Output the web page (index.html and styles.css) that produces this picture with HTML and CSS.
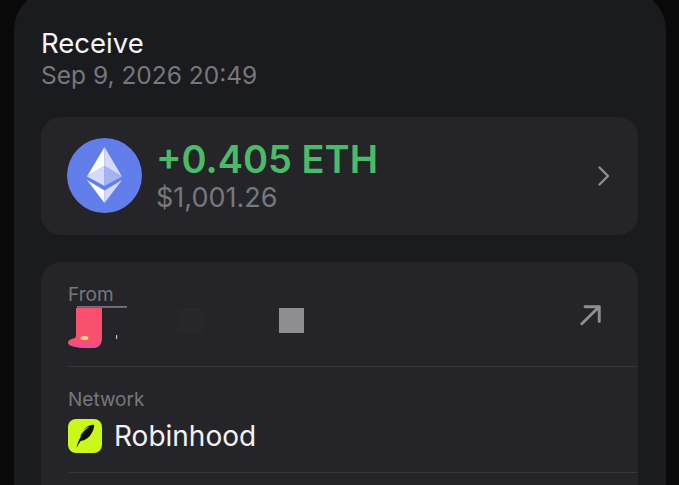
FILE: index.html
```
<!DOCTYPE html>
<html lang="en">
<head>
<meta charset="utf-8">
<title>Receive</title>
<link rel="stylesheet" href="styles.css">
</head>
<body>
<main class="sheet">
  <header class="head">
    <h1 class="title">Receive</h1>
    <p class="date">Sep 9, 2026 20:49</p>
  </header>
  <section class="card amount">
    <svg class="eth" viewBox="0 0 75 75" aria-hidden="true">
      <circle cx="37.5" cy="37.5" r="37.5" fill="#627eea"/>
      <path d="M37.500 9 20 38.500 37.500 28z" fill="#fdfdff"/>
      <path d="M37.500 9 55 38.500 37.500 28z" fill="#d3dafa"/>
      <path d="M20 38.500 37.500 28v20z" fill="#d5dbfa"/>
      <path d="M55 38.500 37.500 28v20z" fill="#a5b3f3"/>
      <path d="M20 42 37.500 52.500V65z" fill="#fdfdff"/>
      <path d="M55 42 37.500 52.500V65z" fill="#d3dafa"/>
    </svg>
    <div class="values">
      <div class="crypto">+0.405 ETH</div>
      <div class="fiat">$1,001.26</div>
    </div>
    <svg class="chevron" viewBox="0 0 14 22" aria-hidden="true">
      <path d="M2.500 2.500 11 11l-8.500 8.500" fill="none" stroke="#8e8e93" stroke-width="2.400" stroke-linecap="round" stroke-linejoin="round"/>
    </svg>
  </section>
  <section class="card details">
    <div class="row row-from">
      <div class="label">From</div>
      <div class="value-line">
        <svg class="redacted" viewBox="0 0 240 50" aria-hidden="true">
          <rect x="9" y="0" width="50" height="1.800" fill="#77777b"/>
          <path d="M8 2h26v29c0 8-3 11-10 11C12 42 1 41 0 37c0-3 3-4 7-5 1-1 1-3 1-5z" fill="#f8506f"/>
          <path d="M0 37c5 1 14 1 20 1 8 0 13-1 14-5-1 6-4 9-10 9C12 42 1 41 0 37z" fill="#ed4b93"/>
          <ellipse cx="16.500" cy="32" rx="4" ry="2" fill="#f7cf7e"/>
          <rect x="48" y="29" width="1.200" height="4" fill="#c8c8cc"/>
          <rect x="110" y="2" width="26" height="25" fill="#27272b"/>
          <rect x="211" y="2" width="25" height="25" fill="#8e8d92"/>
        </svg>
        <svg class="arrow" viewBox="0 0 24 24" aria-hidden="true">
          <path d="M2 21.500 21 3M5.500 3H21v16" fill="none" stroke="#8e8e93" stroke-width="3.200" stroke-linecap="round" stroke-linejoin="round"/>
        </svg>
      </div>
    </div>
    <div class="row row-network">
      <div class="label">Network</div>
      <div class="network">
        <svg class="rh" viewBox="0 0 34 34" aria-hidden="true">
          <rect width="34" height="34" rx="8" fill="#c9f81a"/>
          <path d="M8.500 29c.8-4 2-7.500 4-10.500.3-4.500 3.500-10 9-12 2-.7 4-.8 4.500-.4.500.6 0 3-1 5.400-1.800 4.500-4.500 7.500-8.500 9.500-1.200.6-2.500.8-3.500.7C11 24 9.800 26.500 8.500 29zm5-13.500c1.500-3 4.500-6 8-7.500-4 .6-7.500 3.500-8 7.500z" fill="#0e1204"/>
        </svg>
        <span class="network-name">Robinhood</span>
      </div>
    </div>
  </section>
</main>
</body>
</html>
```

FILE: styles.css
```
* { box-sizing: border-box; }
html { height: 100%; overflow: hidden; }
body {
  margin: 0;
  height: 485px;
  overflow: hidden;
  background: #09090a;
  font-family: Inter, "Liberation Sans", sans-serif;
}
.sheet {
  width: 652px;
  height: 495px;
  margin: -10px 0 0 14px;
  padding: 39px 28px 0 27px;
  overflow: hidden;
  background: #1a1b1e;
  border-radius: 40px 40px 0 0;
}
.title {
  margin: 0;
  font-size: 27.500px;
  line-height: 28px;
  font-weight: 400;
  color: #f5f5f7;
}
.date {
  margin: 5px 0 0;
  font-size: 24.500px;
  line-height: 27px;
  font-weight: 400;
  color: #77777c;
}
.card {
  background: #252529;
  border-radius: 20px;
}
.amount {
  margin-top: 28px;
  height: 118px;
  display: flex;
  align-items: center;
  padding: 0 27px 1px 26px;
}
.eth { width: 75px; height: 75px; flex: none; }
.values { flex: 1; margin-left: 14px; }
.crypto {
  font-size: 38px;
  line-height: 42px;
  font-weight: 600;
  color: #4bbb68;
}
.fiat {
  margin-top: 2px;
  font-size: 27px;
  line-height: 32px;
  color: #77777c;
}
.chevron { width: 14px; height: 22px; flex: none; }
.details {
  margin-top: 27px;
  height: 223px;
  padding-left: 27px;
  border-radius: 20px 20px 0 0;
}
.row { border-bottom: 1px solid #37373b; }
.row-from { height: 105px; padding-top: 21px; }
.row-network { height: 106px; padding-top: 21px; }
.label {
  font-size: 19px;
  line-height: 23px;
  color: #77777c;
}
.value-line {
  display: flex;
  align-items: flex-start;
  justify-content: space-between;
  padding-right: 36px;
}
.redacted { width: 240px; height: 50px; flex: none; }
.arrow { width: 22px; height: 22px; flex: none; margin-top: -2px; }
.network { display: flex; align-items: center; gap: 12px; margin-top: 8px; }
.rh { width: 34px; height: 34px; flex: none; }
.network-name {
  font-size: 28px;
  line-height: 34px;
  color: #f2f2f5;
}
```
